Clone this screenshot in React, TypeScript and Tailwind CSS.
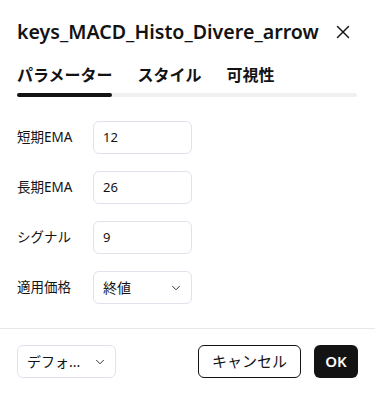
import { ChevronDown, X } from "lucide-react";

const font = { fontFamily: '"Noto Sans", "Noto Sans CJK JP", sans-serif' };

const rows = [
  { label: "短期EMA", value: "12" },
  { label: "長期EMA", value: "26" },
  { label: "シグナル", value: "9" },
];

export default function App() {
  return (
    <div className="w-[375px] h-[394px] bg-white text-[#131313] flex flex-col" style={font}>
      <div className="flex items-center justify-between pl-[17px] pr-[21px] pt-[18px] h-[46px]">
        <h1 className="text-[19.6px] font-semibold leading-none">keys_MACD_Histo_Divere_arrow</h1>
        <button className="text-[#131313]">
          <X size={22} strokeWidth={1.5} />
        </button>
      </div>

      <div className="px-[17px] mt-[19px]">
        <div className="flex gap-[25px] text-[16px] font-bold leading-none h-[20px] items-center">
          <span>パラメーター</span>
          <span>スタイル</span>
          <span>可視性</span>
        </div>
        <div className="mt-[8px] h-[4px] rounded-full bg-[#f0f0f0] w-[340px]">
          <div className="h-[4px] w-[95px] rounded-full bg-[#131313]" />
        </div>
      </div>

      <div className="px-[17px] mt-[24px] flex flex-col gap-[17px]">
        {rows.map((r) => (
          <div key={r.label} className="flex items-center h-[33px]">
            <span className="w-[76px] text-[13.5px]">{r.label}</span>
            <div className="w-[99px] h-[33px] border border-[#e0e3eb] rounded-[6px] flex items-center px-[9px] text-[13px]">
              {r.value}
            </div>
          </div>
        ))}
        <div className="flex items-center h-[33px]">
          <span className="w-[76px] text-[13.5px]">適用価格</span>
          <div className="w-[99px] h-[33px] border border-[#e0e3eb] rounded-[6px] flex items-center justify-between pl-[9px] pr-[8px] text-[14px]">
            <span>終値</span>
            <ChevronDown size={14} strokeWidth={1.5} />
          </div>
        </div>
      </div>

      <div className="mt-auto border-t border-[#e8e8e8] h-[66px] px-[17px] flex items-center justify-between">
        <div className="w-[99px] h-[33px] border border-[#e0e3eb] rounded-[6px] flex items-center justify-between pl-[9px] pr-[8px] text-[14px]">
          <span>デフォ...</span>
          <ChevronDown size={14} strokeWidth={1.5} />
        </div>
        <div className="flex gap-[13px]">
          <button className="w-[103px] h-[33px] border border-[#131313] rounded-[6px] text-[15px]">キャンセル</button>
          <button className="w-[44px] h-[33px] rounded-[6px] bg-[#131313] text-white text-[15px] font-semibold">OK</button>
        </div>
      </div>
    </div>
  );
}
